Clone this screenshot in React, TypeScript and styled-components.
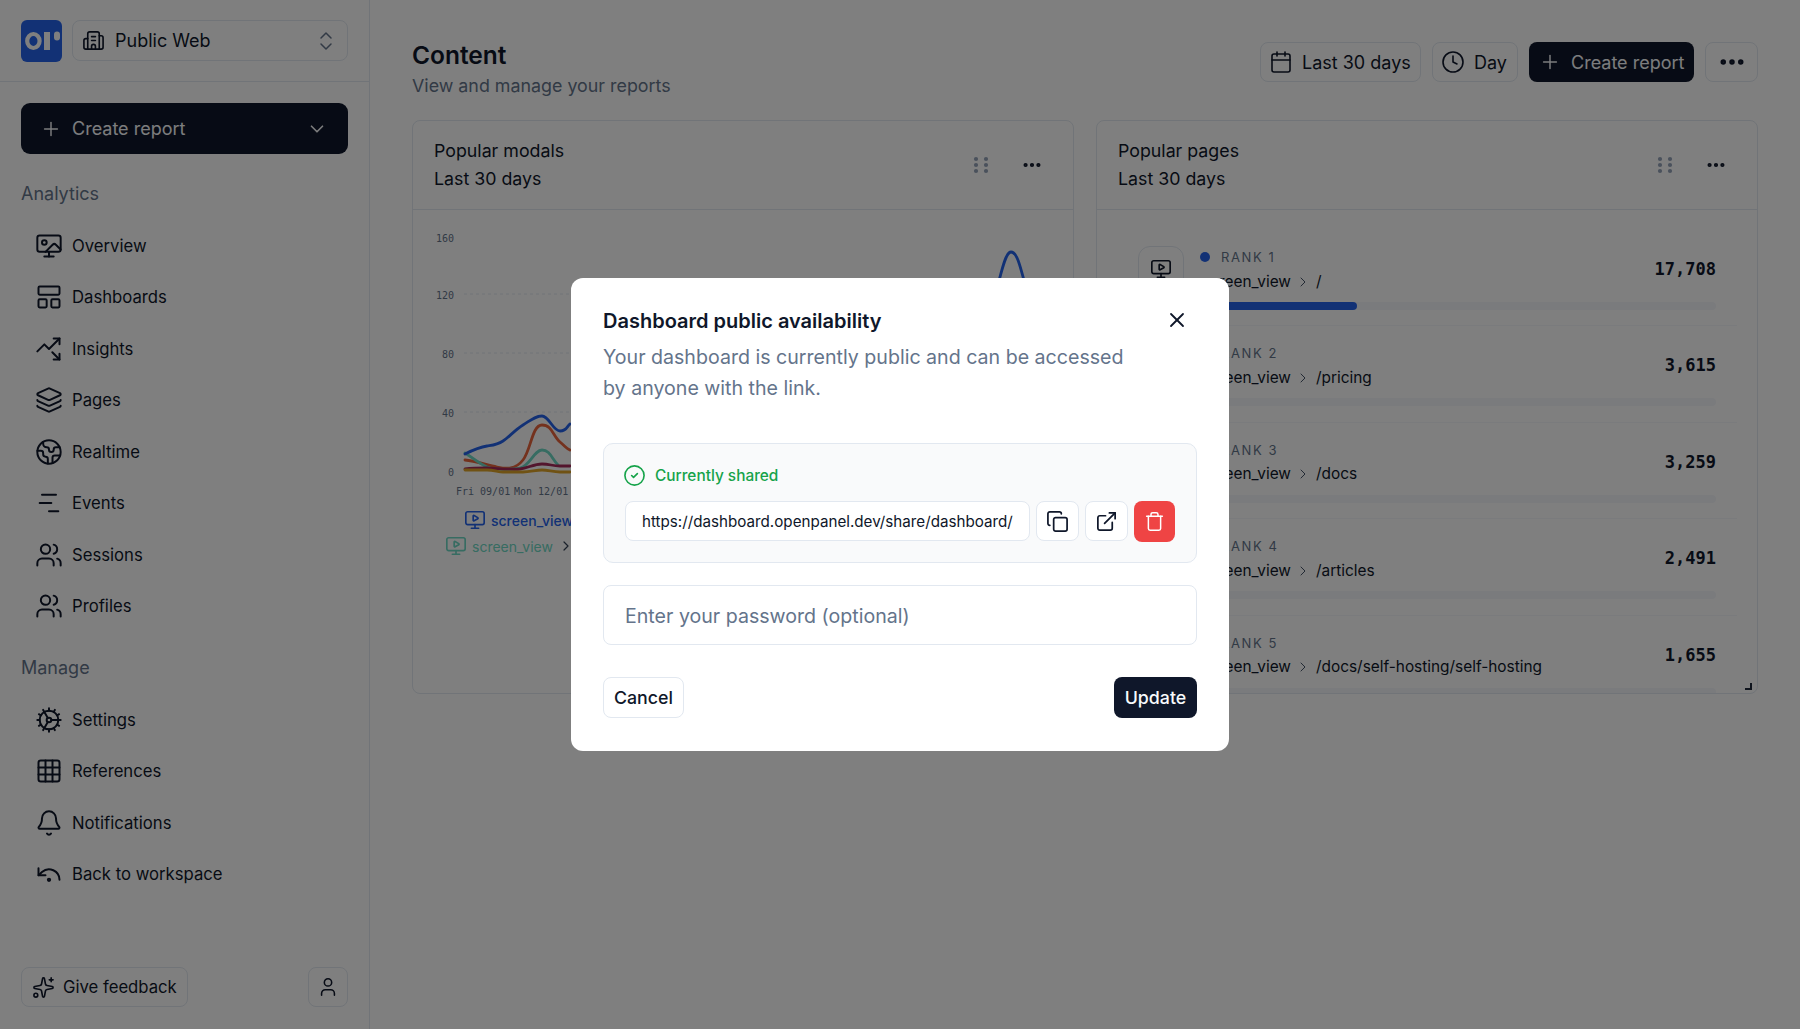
import React from 'react';
import styled, { createGlobalStyle } from 'styled-components';
import {
  Bell, Building2, Calendar, ChartNoAxesGantt, ChevronDown, ChevronRight, ChevronsUpDown, CircleCheck, Clock, Cog, Copy,
  Earth, Ellipsis, ExternalLink, Grid3x3, Layers, LayoutPanelTop, MonitorPlay, Plus, Sparkles, Trash,
  TrendingUpDown, UndoDot, User, Users, Wallpaper, X,
} from 'lucide-react';

const Global = createGlobalStyle`
  * { box-sizing: border-box; }
  html, body { margin: 0; padding: 0; height: 100%; background: #fff; }
  body { font-family: Inter, "Noto Sans", "Liberation Sans", sans-serif; color: #0f172a; overflow: hidden; }
  button { font-family: inherit; }
`;

const Page = styled.div`
  position: relative;
  display: flex;
  width: 1800px;
  height: 1029px;
  overflow: hidden;
  background: #fff;
`;

const Sidebar = styled.aside`
  display: flex;
  flex-direction: column;
  width: 370px;
  height: 100%;
  border-right: 1px solid #e2e8f0;
`;
const SideHeader = styled.div`
  display: flex;
  align-items: center;
  gap: 10px;
  height: 82px;
  padding: 0 21px;
  border-bottom: 1px solid #e2e8f0;
`;
const LogoBox = styled.svg`
  flex: none;
  display: block;
  width: 41px;
  height: 42px;
`;
const ProjectSelect = styled.div`
  display: flex;
  align-items: center;
  flex: 1;
  height: 41px;
  padding: 0 9px 0 9px;
  gap: 10px;
  border: 1px solid #e2e8f0;
  border-radius: 8px;
  font-size: 18px;
`;
const Grow = styled.span`
  flex: 1;
`;
const SideBody = styled.div`
  display: flex;
  flex-direction: column;
  flex: 1;
  padding: 21px 21px 22px;
`;
const SideCreate = styled.div`
  display: flex;
  align-items: center;
  gap: 10px;
  height: 51px;
  padding: 0 20px 0 19px;
  background: #0f172a;
  color: #f8fafc;
  border-radius: 9px;
  font-size: 18px;
`;
const SectionLabel = styled.div<{ $top: number }>`
  height: 26px;
  margin: ${p => p.$top}px 0 13px;
  font-size: 18px;
  line-height: 26px;
  color: #64748b;
`;
const NavItem = styled.div`
  display: flex;
  align-items: center;
  gap: 9px;
  height: 51.5px;
  padding-left: 14px;
  font-size: 16.7px;
`;
const SideFooter = styled.div`
  display: flex;
  justify-content: space-between;
  margin-top: auto;
`;
const FeedbackButton = styled.div`
  display: flex;
  align-items: center;
  gap: 8px;
  height: 40px;
  width: 167px;
  padding-left: 10px;
  border: 1px solid #e2e8f0;
  border-radius: 8px;
  font-size: 16.7px;
`;
const SquareButton = styled.div<{ $w?: number }>`
  display: flex;
  align-items: center;
  justify-content: center;
  width: ${p => p.$w ?? 40}px;
  height: 40px;
  border: 1px solid #e2e8f0;
  border-radius: 8px;
  background: #fff;
`;

const Main = styled.main`
  flex: 1;
  padding: 42px 42px 0;
`;
const MainHeader = styled.header`
  display: flex;
  justify-content: space-between;
  height: 78px;
`;
const Title = styled.h1`
  margin: 0;
  font-size: 24.5px;
  line-height: 26px;
  font-weight: 600;
  color: #0f172a;
`;
const Subtitle = styled.p`
  margin: 6px 0 0;
  font-size: 17.85px;
  line-height: 24px;
  color: #64748b;
`;
const Toolbar = styled.div`
  display: flex;
  gap: 11px;
`;
const OutlineButton = styled.div<{ $w: number }>`
  display: flex;
  align-items: center;
  gap: 9px;
  width: ${p => p.$w}px;
  height: 40px;
  padding-left: 8px;
  border: 1px solid #e2e8f0;
  border-radius: 8px;
  font-size: 18px;
`;
const DarkButton = styled.div`
  display: flex;
  align-items: center;
  gap: 10px;
  width: 165px;
  height: 40px;
  padding-left: 10px;
  background: #0f172a;
  color: #f8fafc;
  border-radius: 8px;
  font-size: 18px;
`;
const CardGrid = styled.div`
  display: grid;
  grid-template-columns: 662px 662px;
  gap: 22px;
`;
const Card = styled.section`
  position: relative;
  height: 574px;
  border: 1px solid #e2e8f0;
  border-radius: 8px;
  overflow: hidden;
`;
const CardHead = styled.div`
  display: flex;
  align-items: center;
  gap: 32px;
  height: 89px;
  padding: 0 30px 0 21px;
  border-bottom: 1px solid #e2e8f0;
  font-size: 17.8px;
  line-height: 28px;
`;
const CardTitle = styled.div`
  flex: 1;
`;
const GripIcon = styled.svg`
  display: block;
  flex: none;
  width: 16px;
  height: 18px;
  fill: #94a3b8;
`;
const Chart = styled.svg`
  display: block;
  width: 660px;
  height: 299px;
`;
const Legend = styled.div`
  display: flex;
  flex-direction: column;
  gap: 4px;
`;
const LegendRow = styled.div<{ $left: number; $color: string; $weight: number }>`
  display: flex;
  align-items: center;
  gap: 5px;
  height: 22px;
  padding-left: ${p => p.$left}px;
  font-size: 14px;
  font-weight: ${p => p.$weight};
  color: ${p => p.$color};
  white-space: nowrap;
`;
const RowList = styled.div`
  padding: 20px 20px 0;
`;
const Row = styled.div`
  height: 96.4px;
  padding: 16px 21px 0 21px;
  border-bottom: 1px solid #f5f7fa;
`;
const RowTop = styled.div`
  display: flex;
  align-items: center;
  gap: 15px;
`;
const RowIcon = styled.div`
  display: flex;
  align-items: center;
  justify-content: center;
  flex: none;
  width: 46px;
  height: 46px;
  border: 1px solid #e2e8f0;
  border-radius: 12px;
`;
const RowText = styled.div`
  flex: 1;
`;
const Rank = styled.div`
  display: flex;
  align-items: center;
  gap: 11px;
  height: 17px;
  font-size: 13px;
  font-weight: 400;
  letter-spacing: 1.6px;
  color: #64748b;
`;
const Dot = styled.span<{ $on: boolean }>`
  width: 10px;
  height: 10px;
  margin-left: 1px;
  border-radius: 50%;
  background: ${p => (p.$on ? '#2563eb' : '#e2e8f0')};
`;
const RowName = styled.div`
  display: flex;
  align-items: center;
  gap: 4px;
  height: 16px;
  margin-top: 8px;
  padding-left: 3px;
  overflow: hidden;
  font-size: 15.4px;
  line-height: 16px;
`;
const RowPath = styled.span`
  margin-left: 1px;
`;
const RowValue = styled.div`
  font-family: "DejaVu Sans Mono", "Liberation Mono", monospace;
  font-size: 17px;
  font-weight: 700;
`;
const Track = styled.div`
  height: 8px;
  margin: 10px 0 0 61px;
  background: #f5f7fa;
  border-radius: 4px;
  overflow: hidden;
`;
const Fill = styled.div`
  height: 100%;
  background: #2563eb;
  border-radius: 4px;
`;
const ResizeCorner = styled.span`
  position: absolute;
  right: 5px;
  bottom: 3px;
  width: 7px;
  height: 7px;
  border-right: 2px solid #1e293b;
  border-bottom: 2px solid #1e293b;
`;

const Backdrop = styled.div`
  position: absolute;
  inset: 0;
  display: flex;
  align-items: center;
  justify-content: center;
  background: rgba(0, 0, 0, 0.5);
`;
const Modal = styled.div`
  position: relative;
  width: 658px;
  height: 473px;
  padding: 29px 32px 0;
  background: #fff;
  border-radius: 12px;
`;
const ModalTitle = styled.h2`
  margin: 0;
  font-size: 20px;
  line-height: 28px;
  font-weight: 600;
  color: #0f172a;
`;
const ModalText = styled.p`
  width: 530px;
  margin: 7px 0 0;
  font-size: 19.6px;
  line-height: 31px;
  color: #64748b;
`;
const CloseIcon = styled.span`
  position: absolute;
  top: 30px;
  right: 40px;
  display: flex;
`;
const ShareBox = styled.div`
  height: 120px;
  margin-top: 39px;
  padding: 21px 20px 0 21px;
  background: #f9fafb;
  border: 1px solid #e2e8f0;
  border-radius: 10px;
`;
const SharedLabel = styled.div`
  display: flex;
  align-items: center;
  gap: 9px;
  height: 20px;
  margin-left: -2px;
  font-size: 15.4px;
  font-weight: 500;
  color: #16a34a;
`;
const ShareRow = styled.div`
  display: flex;
  gap: 6px;
  margin-top: 16px;
`;
const UrlField = styled.div`
  width: 405px;
  height: 40px;
  padding: 0 16px;
  background: #fff;
  border: 1px solid #e2e8f0;
  border-radius: 8px;
  font-size: 15.2px;
  line-height: 40px;
  color: #0f172a;
`;
const UrlClip = styled.div`
  overflow: hidden;
  white-space: nowrap;
`;
const DangerButton = styled.div`
  display: flex;
  align-items: center;
  justify-content: center;
  width: 41px;
  height: 41px;
  background: #ef4444;
  color: #fff;
  border-radius: 8px;
`;
const PasswordField = styled.div`
  height: 60px;
  margin-top: 22px;
  padding-left: 21px;
  border: 1px solid #e2e8f0;
  border-radius: 8px;
  font-size: 19.6px;
  line-height: 60px;
  color: #64748b;
`;
const ModalActions = styled.div`
  display: flex;
  justify-content: space-between;
  margin-top: 32px;
`;
const CancelButton = styled.div`
  width: 81px;
  height: 41px;
  border: 1px solid #e2e8f0;
  border-radius: 8px;
  font-size: 17.8px;
  font-weight: 500;
  line-height: 39px;
  text-align: center;
`;
const UpdateButton = styled.div`
  width: 83px;
  height: 41px;
  background: #0f172a;
  color: #f8fafc;
  border-radius: 8px;
  font-size: 17.8px;
  font-weight: 500;
  line-height: 41px;
  text-align: center;
`;

const Grip = () => (
  <GripIcon viewBox="0 0 16 18" aria-hidden="true">
    {[3, 13].map(x => [3, 9, 15].map(y => <circle key={`${x}-${y}`} cx={x} cy={y} r="2.1" />))}
  </GripIcon>
);

const analytics = [
  ['Overview', Wallpaper], ['Dashboards', LayoutPanelTop], ['Insights', TrendingUpDown], ['Pages', Layers],
  ['Realtime', Earth], ['Events', ChartNoAxesGantt], ['Sessions', Users], ['Profiles', Users],
] as const;
const manage = [
  ['Settings', Cog], ['References', Grid3x3], ['Notifications', Bell], ['Back to workspace', UndoDot],
] as const;
const rows = [
  { rank: 1, path: '/', value: 17708, pct: 30.6 },
  { rank: 2, path: '/pricing', value: 3615, pct: 5 },
  { rank: 3, path: '/docs', value: 3259, pct: 4.6 },
  { rank: 4, path: '/articles', value: 2491, pct: 3.6 },
  { rank: 5, path: '/docs/self-hosting/self-hosting', value: 1655, pct: 2.4 },
];
const ticks = [['160', 238], ['120', 295], ['80', 354], ['40', 413], ['0', 472]] as const;
const series = [
  ['#e8643c', 'M465 460C475 461 487 465 497 467S515 470 523 460S532 425 542 425S553 436 560 442S566 448 570 450'],
  ['#6ed8c4', 'M465 453C473 458 480 464 487 467S510 470 520 468S534 450 542 450S552 459 558 465'],
  ['#a62a5a', 'M465 469C473 468 480 468 487 468S512 470 520 469S534 464 542 464S552 466 560 466H570'],
  ['#e0a528', 'M465 470C473 470 480 470 487 470S498 472 503 472H523C530 472 536 470 542 470S553 472 560 472H570'],
  ['#2563eb', 'M465 454C473 450 480 447 487 446S497 445 503 441S515 430 523 425S535 416 542 416S553 431 560 431S567 426 570 424M996 292C1001 275 1005 252 1011 252S1020 265 1027 292'],
];

const App = () => (
  <Page>
    <Global />
    <Sidebar>
      <SideHeader>
        <LogoBox viewBox="0 0 41 42" aria-hidden="true">
          <rect width="41" height="42" rx="6" fill="#2563eb" />
          <ellipse cx="12.4" cy="21" rx="6.2" ry="7" fill="none" stroke="#fff" strokeWidth="4.2" />
          <rect x="23" y="12" width="6" height="18" fill="#fff" />
          <rect x="33" y="11.5" width="6" height="9" rx="3" fill="#fff" />
        </LogoBox>
        <ProjectSelect>
          <Building2 size={23} strokeWidth={1.7} />
          <Grow>Public Web</Grow>
          <ChevronsUpDown size={24} strokeWidth={1.5} color="#64748b" />
        </ProjectSelect>
      </SideHeader>
      <SideBody>
        <SideCreate>
          <Plus size={22} strokeWidth={1.6} />
          <Grow>Create report</Grow>
          <ChevronDown size={22} strokeWidth={1.8} />
        </SideCreate>
        <SectionLabel $top={27}>Analytics</SectionLabel>
        {analytics.map(([label, Icon]) => (
          <NavItem key={label}><Icon size={28} strokeWidth={1.7} />{label}</NavItem>
        ))}
        <SectionLabel $top={23}>Manage</SectionLabel>
        {manage.map(([label, Icon]) => (
          <NavItem key={label}><Icon size={28} strokeWidth={1.7} />{label}</NavItem>
        ))}
        <SideFooter>
          <FeedbackButton><Sparkles size={23} strokeWidth={1.7} />Give feedback</FeedbackButton>
          <SquareButton><User size={22} strokeWidth={1.7} /></SquareButton>
        </SideFooter>
      </SideBody>
    </Sidebar>
    <Main>
      <MainHeader>
        <div>
          <Title>Content</Title>
          <Subtitle>View and manage your reports</Subtitle>
        </div>
        <Toolbar>
          <OutlineButton $w={161}><Calendar size={24} strokeWidth={1.6} />Last 30 days</OutlineButton>
          <OutlineButton $w={86}><Clock size={24} strokeWidth={1.6} />Day</OutlineButton>
          <DarkButton><Plus size={22} strokeWidth={1.6} />Create report</DarkButton>
          <SquareButton $w={53}><Ellipsis size={30} strokeWidth={2.4} /></SquareButton>
        </Toolbar>
      </MainHeader>
      <CardGrid>
        <Card>
          <CardHead>
            <CardTitle>Popular modals<br />Last 30 days</CardTitle>
            <Grip />
            <Ellipsis size={22} strokeWidth={2.6} />
          </CardHead>
          <Chart viewBox="413 210 660 299" aria-hidden="true">
            {ticks.map(([label, y]) => (
              <g key={label}>
                <text x="454" y={y + 3.5} textAnchor="end" fontFamily="DejaVu Sans Mono" fontSize="10" fill="#64748b">{label}</text>
                {label !== '160' && label !== '0' && (
                  <line x1="464" x2="1060" y1={y - 1} y2={y - 1} stroke="#e2e8f0" strokeDasharray="3 3" />
                )}
              </g>
            ))}
            {series.map(([color, d]) => (
              <path key={color} d={d} fill="none" stroke={color} strokeWidth="2.8" strokeLinecap="round" />
            ))}
            <text x="456" y="495" fontFamily="DejaVu Sans Mono" fontSize="10" fill="#64748b">Fri 09/01</text>
            <text x="514" y="495" fontFamily="DejaVu Sans Mono" fontSize="10" fill="#64748b">Mon 12/01</text>
          </Chart>
          <Legend>
            <LegendRow $left={51} $color="#2563eb" $weight={500}>
              <MonitorPlay size={22} strokeWidth={1.8} />screen_view
            </LegendRow>
            <LegendRow $left={32} $color="#6ed8c4" $weight={400}>
              <MonitorPlay size={22} strokeWidth={1.8} />screen_view
              <ChevronRight size={16} strokeWidth={1.8} color="#334155" />
            </LegendRow>
          </Legend>
        </Card>
        <Card>
          <CardHead>
            <CardTitle>Popular pages<br />Last 30 days</CardTitle>
            <Grip />
            <Ellipsis size={22} strokeWidth={2.6} />
          </CardHead>
          <RowList>
            {rows.map(r => (
              <Row key={r.rank}>
                <RowTop>
                  <RowIcon><MonitorPlay size={22} strokeWidth={1.8} /></RowIcon>
                  <RowText>
                    <Rank><Dot $on={r.rank === 1} />RANK {r.rank}</Rank>
                    <RowName>
                      screen_view
                      <ChevronRight size={16} strokeWidth={1.5} color="#475569" />
                      <RowPath>{r.path}</RowPath>
                    </RowName>
                  </RowText>
                  <RowValue>{r.value.toLocaleString('en-US')}</RowValue>
                </RowTop>
                <Track><Fill style={{ width: `${r.pct}%` }} /></Track>
              </Row>
            ))}
          </RowList>
          <ResizeCorner />
        </Card>
      </CardGrid>
    </Main>
    <Backdrop>
      <Modal>
        <ModalTitle>Dashboard public availability</ModalTitle>
        <ModalText>Your dashboard is currently public and can be accessed by anyone with the link.</ModalText>
        <CloseIcon><X size={24} strokeWidth={1.8} /></CloseIcon>
        <ShareBox>
          <SharedLabel><CircleCheck size={23} strokeWidth={1.7} />Currently shared</SharedLabel>
          <ShareRow>
            <UrlField><UrlClip>https://dashboard.openpanel.dev/share/dashboard/Tk5rPz</UrlClip></UrlField>
            <SquareButton $w={43}><Copy size={23} strokeWidth={1.8} /></SquareButton>
            <SquareButton $w={43}><ExternalLink size={23} strokeWidth={1.8} /></SquareButton>
            <DangerButton><Trash size={21} strokeWidth={1.7} /></DangerButton>
          </ShareRow>
        </ShareBox>
        <PasswordField>Enter your password (optional)</PasswordField>
        <ModalActions>
          <CancelButton>Cancel</CancelButton>
          <UpdateButton>Update</UpdateButton>
        </ModalActions>
      </Modal>
    </Backdrop>
  </Page>
);

export default App;
